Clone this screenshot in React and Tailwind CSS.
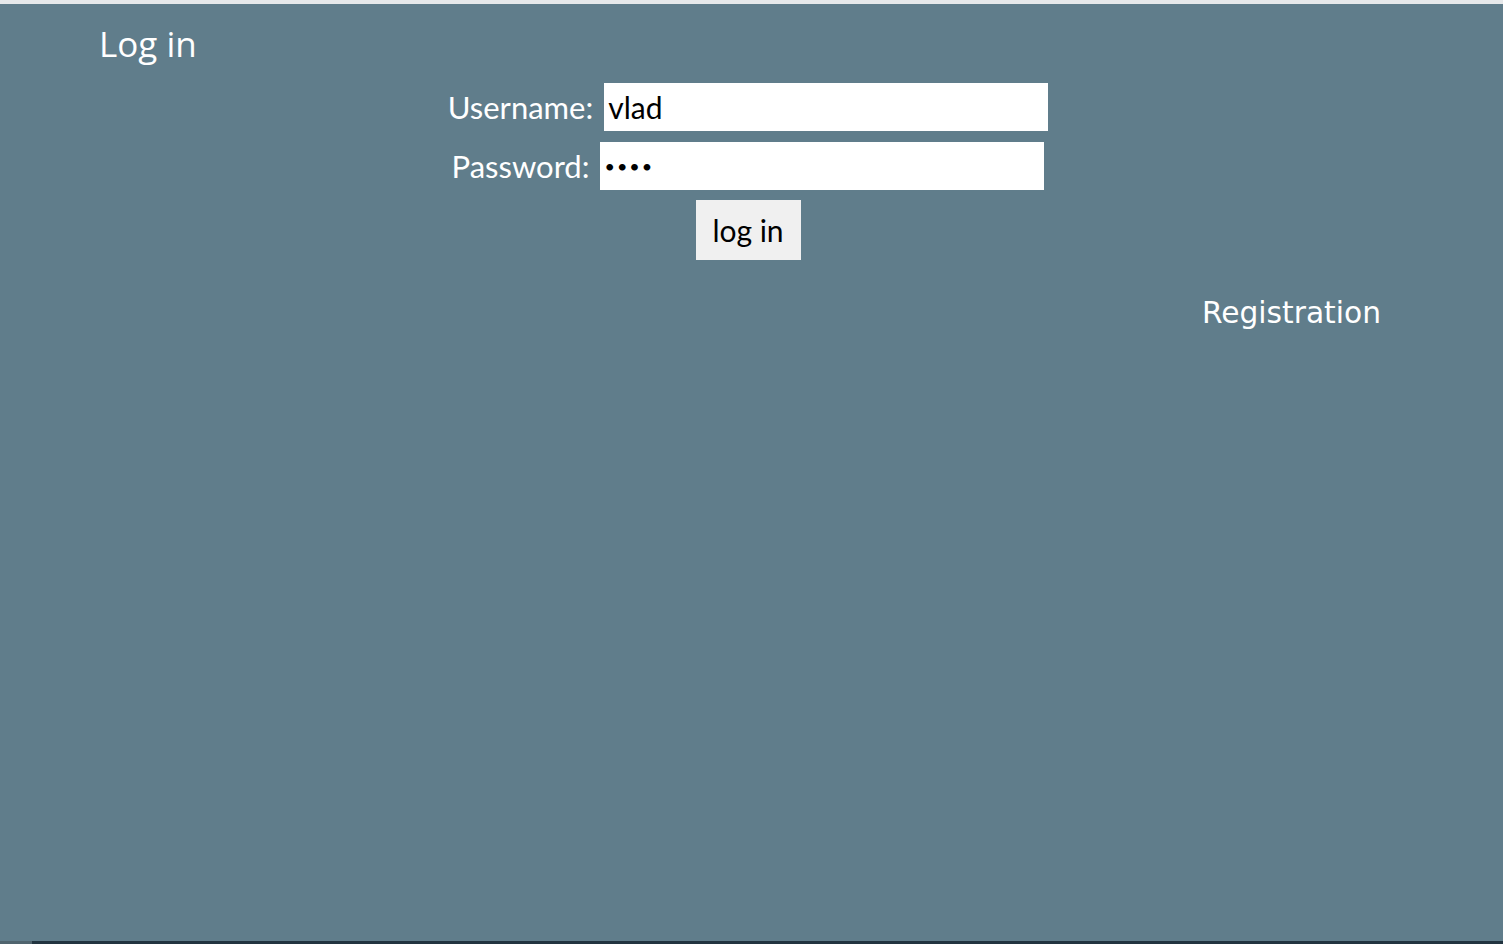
import React, { useState } from 'react';

const formFont = { fontFamily: '"Comic Sans MS", "Lato", "Noto Sans", sans-serif' };

const Field = ({ label, type, value, onChange, size }) => (
  <div className="flex items-center gap-[11px]">
    <label className="text-[31px] text-white leading-none" style={formFont}>{label}</label>
    <input
      type={type}
      value={value}
      onChange={onChange}
      className={`w-[444px] h-[48px] bg-white text-black ${size} px-[4px] outline-none`}
      style={formFont}
    />
  </div>
);

export default function App() {
  const [username, setUsername] = useState('vlad');
  const [password, setPassword] = useState('1234');

  return (
    <div className="min-h-[944px] flex flex-col bg-[#607d8b]">
      <div className="h-[4px] bg-[#e6e8ea]" />
      <main className="flex-1 flex flex-col">
        <h1 className="pl-[99px] pt-[20px] text-[35px] text-white leading-[40px] font-['Open_Sans',sans-serif]">Log in</h1>

        {/* login form */}
        <form className="flex flex-col items-center mt-[19px] pr-[7px] gap-[11px]" onSubmit={e => e.preventDefault()}>
          <Field label="Username:" type="text" value={username} onChange={e => setUsername(e.target.value)} size="text-[30px]" />
          <Field label="Password:" type="password" value={password} onChange={e => setPassword(e.target.value)} size="text-[18px] tracking-[2px]" />
          <button
            type="submit"
            className="mt-[-1px] w-[105px] h-[60px] bg-[#f0f0f0] text-black text-[30px] leading-none"
            style={formFont}
          >
            log in
          </button>
        </form>

        <div className="flex justify-end pr-[122px] mt-[35px]">
          <a href="#" className="text-[29.7px] text-white leading-[36px] font-['DejaVu_Sans',sans-serif]">Registration</a>
        </div>
      </main>
      <div className="h-[3px] flex">
        <div className="w-[32px] bg-[#50646e]" />
        <div className="flex-1 bg-[#223440]" />
      </div>
    </div>
  );
}
